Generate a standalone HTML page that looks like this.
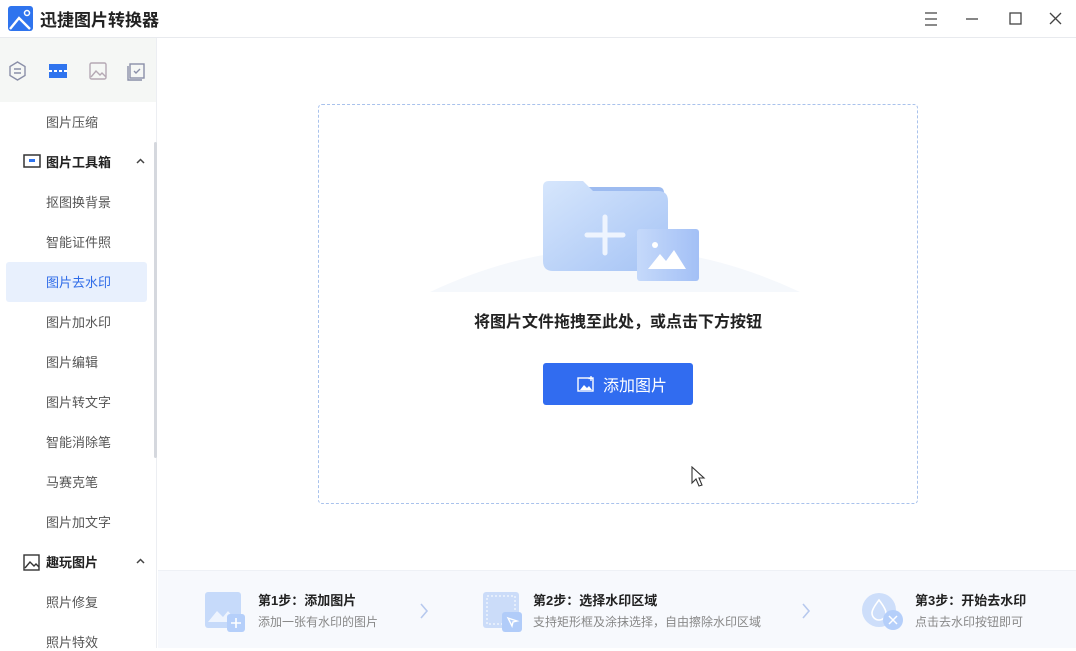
<!DOCTYPE html>
<html><head><meta charset="utf-8"><style>
*{margin:0;padding:0;box-sizing:border-box}
body{width:1076px;height:648px;overflow:hidden;background:#fff;font-family:"Liberation Sans","Noto Sans CJK SC",sans-serif;position:relative;color:#333}
.abs{position:absolute}
.top{left:0;top:0;width:1076px;height:38px;border-bottom:1px solid #e8eaee;background:#fff}
.title{left:40px;top:6px;font-size:17px;font-weight:bold;color:#222}
.side{left:0;top:38px;width:157px;height:610px;border-right:1px solid #eceef2;background:#fff}
.iconbar{left:0;top:38px;width:156px;height:64px;background:#f5f7f5}
.item{position:absolute;left:46px;font-size:13px;color:#555}
.hdr{position:absolute;left:46px;font-size:13px;font-weight:bold;color:#222}
.sel{left:6px;top:262px;width:141px;height:40px;background:#e8f0fd;border-radius:3px}
.drop{left:318px;top:104px;width:600px;height:400px;border:1px dashed #a9c2ec;border-radius:4px}
.btn{left:543px;top:363px;width:150px;height:42px;background:#316cf0;border-radius:3px;color:#fff;font-size:16px}
.bottom{left:158px;top:570px;width:918px;height:78px;background:#f7f9fd;border-top:1px solid #eef1f6}
.st{position:absolute;font-size:13px;font-weight:bold;color:#222}
.sd{position:absolute;font-size:12px;color:#888}
</style></head><body>
<div class="abs top"></div>
<svg class="abs" style="left:8px;top:6px" width="25" height="25" viewBox="0 0 25 25"><rect width="25" height="25" rx="3" fill="#2f74ee"/><path d="M2 23 L11 12 L22 23" stroke="#fff" stroke-width="2.4" fill="none"/><circle cx="19" cy="7" r="2.5" stroke="#fff" stroke-width="1.5" fill="none"/></svg>
<div class="abs title">迅捷图片转换器</div>
<svg class="abs" style="left:924px;top:11px" width="140" height="16"><g stroke="#444" stroke-width="1.3" fill="none"><path d="M1 2h12M1 8h12M1 14h12"/><path d="M42 8h12"/><rect x="86" y="2" width="11" height="11"/><path d="M126 2l11 11M137 2l-11 11"/></g></svg>
<div class="abs side"></div>
<div class="abs iconbar"></div>
<svg class="abs" style="left:8px;top:61px" width="140" height="20"><g fill="none" stroke="#8a8fa8" stroke-width="1.4"><path d="M9.5 1 L17 5.5 V14.5 L9.5 19 L2 14.5 V5.5Z"/><path d="M6 8h7M6 12h7"/><rect x="82" y="2" width="16" height="16" rx="1.5" stroke="#b5a9b4"/><path d="M83 16l5-6 4 4 2-2 4 4" stroke="#b5a9b4"/><rect x="122" y="3" width="14" height="14"/><path d="M120 5v14h14"/><path d="M126 10l2 2 4-4"/></g><rect x="41" y="3" width="18" height="14" fill="#2f74ee"/><path d="M41 10h18" stroke="#fff" stroke-width="2" stroke-dasharray="3 2"/></svg>
<div class="abs" style="left:154px;top:142px;width:3px;height:316px;background:#d5d8de;border-radius:2px"></div>
<div class="item" style="top:112px">图片压缩</div>
<svg class="abs" style="left:23px;top:154px" width="18" height="14"><rect x="1" y="1" width="16" height="12" fill="none" stroke="#333" stroke-width="1.5"/><rect x="6" y="5" width="6" height="3" fill="#2f74ee"/></svg>
<div class="hdr" style="top:152px">图片工具箱</div>
<svg class="abs" style="left:136px;top:158px" width="9" height="6"><path d="M1 5l3.5-3.5L8 5" stroke="#444" stroke-width="1.5" fill="none"/></svg>
<div class="abs sel"></div>
<div class="item" style="top:192px">抠图换背景</div>
<div class="item" style="top:232px">智能证件照</div>
<div class="item" style="top:272px;color:#2f6ce8">图片去水印</div>
<div class="item" style="top:312px">图片加水印</div>
<div class="item" style="top:352px">图片编辑</div>
<div class="item" style="top:392px">图片转文字</div>
<div class="item" style="top:432px">智能消除笔</div>
<div class="item" style="top:472px">马赛克笔</div>
<div class="item" style="top:512px">图片加文字</div>
<svg class="abs" style="left:23px;top:553px" width="18" height="18"><rect x="1" y="2" width="15" height="15" fill="none" stroke="#333" stroke-width="1.4"/><path d="M2 15l5-6 4 4 2-2 3 3" fill="none" stroke="#333" stroke-width="1.4"/></svg>
<div class="hdr" style="top:552px">趣玩图片</div>
<svg class="abs" style="left:136px;top:558px" width="9" height="6"><path d="M1 5l3.5-3.5L8 5" stroke="#444" stroke-width="1.5" fill="none"/></svg>
<div class="item" style="top:592px">照片修复</div>
<div class="item" style="top:632px">照片特效</div>
<div class="abs drop"></div>
<svg class="abs" style="left:430px;top:175px" width="370" height="120"><defs><linearGradient id="g" x1="0" y1="0" x2="1" y2="1"><stop offset="0" stop-color="#d6e6fc"/><stop offset="1" stop-color="#a5c3f5"/></linearGradient><linearGradient id="g2" x1="0" y1="0" x2="1" y2="0"><stop offset="0" stop-color="#c5d9fa"/><stop offset="1" stop-color="#a3c0f6"/></linearGradient></defs><path d="M0 117 Q185 30 370 117Z" fill="#f5f8fc"/><path d="M120 12 h108 q6 0 6 6 v4 h-108Z" fill="#9dbbf0"/><path d="M113 12 q0-6 6-6 h34 l10 10 h65 q10 0 10 10 v60 q0 10-10 10 h-105 q-10 0-10-10Z" fill="url(#g)"/><path d="M157 60h36M175 42v36" stroke="#eef4fe" stroke-width="5" stroke-linecap="round"/><rect x="207" y="54" width="62" height="52" rx="3" fill="url(#g2)"/><circle cx="225" cy="70" r="3" fill="#fff"/><path d="M218 94l12-15 6 7 8-11 12 19z" fill="#fff"/></svg>
<div class="abs" style="left:318px;top:308px;width:600px;text-align:center;font-size:16px;font-weight:bold;color:#222">将图片文件拖拽至此处，或点击下方按钮</div>
<div class="abs btn"><svg class="abs" style="left:34px;top:13px" width="18" height="16"><rect x="1" y="2" width="15" height="13" fill="none" stroke="#fff" stroke-width="1.4"/><path d="M3 14l4-5 3 3 2-2 3 4z" fill="#fff"/><path d="M14 0v5M11.5 2.5h5" stroke="#fff" stroke-width="1.3"/></svg><span class="abs" style="left:60px;top:9px">添加图片</span></div>
<svg class="abs" style="left:690px;top:466px" width="16" height="22"><path d="M2 1v16l4-4 3 7 3-1-3-7h5z" fill="#fff" stroke="#333" stroke-width="1.1"/></svg>
<div class="abs bottom"></div>
<svg class="abs" style="left:205px;top:592px" width="42" height="40"><rect x="0" y="0" width="36" height="36" rx="3" fill="#c6dafa"/><path d="M3 30l9-11 6 6 5-6 9 11z" fill="#eef4fe"/><rect x="22" y="22" width="18" height="18" rx="3" fill="#b5cffa"/><path d="M31 26v10M26 31h10" stroke="#fff" stroke-width="1.6"/></svg>
<div class="st" style="left:258px;top:590px">第1步：添加图片</div>
<div class="sd" style="left:258px;top:613px">添加一张有水印的图片</div>
<svg class="abs" style="left:419px;top:602px" width="10" height="18"><path d="M2 2l6 7-6 7" stroke="#b7c9ee" stroke-width="1.6" fill="none"/></svg>
<svg class="abs" style="left:483px;top:592px" width="42" height="42"><rect x="0" y="0" width="36" height="36" rx="3" fill="#cbdcf9"/><rect x="4" y="4" width="28" height="28" fill="none" stroke="#fff" stroke-dasharray="2 2"/><rect x="19" y="20" width="20" height="20" rx="3" fill="#b1ccf9"/><path d="M25 26l9 3-4 1-1 4z" fill="none" stroke="#fff" stroke-width="1.4"/></svg>
<div class="st" style="left:533px;top:590px">第2步：选择水印区域</div>
<div class="sd" style="left:533px;top:613px">支持矩形框及涂抹选择，自由擦除水印区域</div>
<svg class="abs" style="left:801px;top:602px" width="10" height="18"><path d="M2 2l6 7-6 7" stroke="#b7c9ee" stroke-width="1.6" fill="none"/></svg>
<svg class="abs" style="left:861px;top:592px" width="44" height="40"><circle cx="18" cy="18" r="17" fill="#cddefa"/><path d="M18 8q-7 9-7 13a7 7 0 0 0 14 0q0-4-7-13z" fill="none" stroke="#fff" stroke-width="1.6"/><circle cx="32" cy="28" r="10" fill="#b5cffa"/><path d="M28 24l8 8M36 24l-8 8" stroke="#fff" stroke-width="1.5"/></svg>
<div class="st" style="left:915px;top:590px">第3步：开始去水印</div>
<div class="sd" style="left:915px;top:613px">点击去水印按钮即可</div>
</body></html>
